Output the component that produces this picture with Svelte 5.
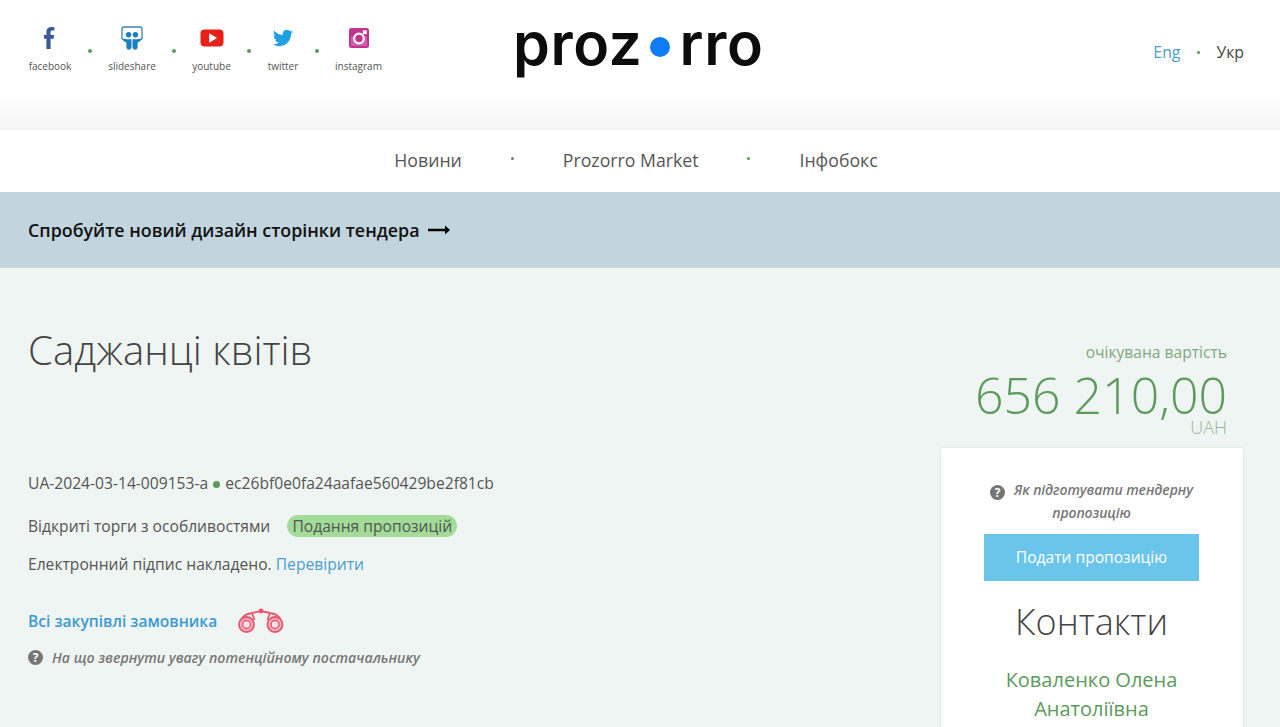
<script>
  const SOCIAL = [
    { name: 'facebook', width: 44 },
    { name: 'slideshare', width: 48 },
    { name: 'youtube', width: 39 },
    { name: 'twitter', width: 32 },
    { name: 'instagram', width: 47 },
  ];
</script>

<div class="page">
  <header class="top">
    <ul class="social">
      {#each SOCIAL as s, i}
        {#if i > 0}<li class="sep"></li>{/if}
        <li class="soc" style="width: {s.width}px">
          <span class="ico">
            {#if s.name === 'facebook'}
              <svg width="24" height="24" viewBox="0 0 24 24"><path fill="#3b5998" d="M16.4 1.2c-1-.2-2.2-.2-3-.2-3.2 0-5 1.8-5 4.8V9H6v3.8h2.4V23h4.2V12.8h3l.5-3.8h-3.5V6.2c0-1 .4-1.7 1.9-1.7h1.9z"/></svg>
            {:else if s.name === 'slideshare'}
              <svg width="24" height="24" viewBox="0 0 24 24">
                <path fill="#fff" stroke="#3a82b8" stroke-width="1.3" d="M2 12.5V3a2 2 0 0 1 2-2h16a2 2 0 0 1 2 2v9.5"/>
                <path fill="#1a7fc1" d="M1 11.5c2 1.2 3.5 1.7 5.5 1.7h5V21c0 1.6-1.2 2.7-2.6 2.7S6.4 22.6 6.4 21v-4.5C4 15.5 2 14 1 11.5zM23 11.5c-2 1.2-3.5 1.7-5.5 1.7h-5V21c0 1.6 1.2 2.7 2.6 2.7s2.5-1.1 2.5-2.7v-4.500c2.400-1 4.400-2.500 5.400-5z"/>
                <circle cx="8.6" cy="8.8" r="2.7" fill="#1a7fc1"/>
                <circle cx="15.4" cy="8.8" r="2.7" fill="#1a7fc1"/>
              </svg>
            {:else if s.name === 'youtube'}
              <svg width="24" height="24" viewBox="0 0 24 24">
                <rect x="0.5" y="3.5" width="23" height="17" rx="4" fill="#e62117"/>
                <path fill="#fff" d="M9.2 7.3v9.4l8-4.7z"/>
              </svg>
            {:else if s.name === 'twitter'}
              <svg width="20" height="20" viewBox="0 0 24 24"><path fill="#1da1e2" d="M23.953 4.57a10 10 0 01-2.825.775 4.958 4.958 0 002.163-2.723c-.951.555-2.005.959-3.127 1.184a4.92 4.92 0 00-8.384 4.482C7.69 8.095 4.067 6.13 1.64 3.162a4.822 4.822 0 00-.666 2.475c0 1.71.87 3.213 2.188 4.096a4.904 4.904 0 01-2.228-.616v.06a4.923 4.923 0 003.946 4.827 4.996 4.996 0 01-2.212.085 4.936 4.936 0 004.604 3.417 9.867 9.867 0 01-6.102 2.105c-.39 0-.779-.023-1.17-.067a13.995 13.995 0 007.557 2.209c9.053 0 13.998-7.496 13.998-13.985 0-.21 0-.42-.015-.63A9.935 9.935 0 0024 4.59z"/></svg>
            {:else}
              <svg width="20" height="20" viewBox="0 0 20 20">
                <rect width="20" height="20" rx="2.5" fill="#c1338f"/>
                <rect x="2" y="8.5" width="16" height="9.5" fill="#dd8cc4" opacity="0.5"/>
                <circle cx="10" cy="10.5" r="4.8" fill="#c1338f" stroke="#fff" stroke-width="2.2"/>
                <rect x="13.8" y="2.2" width="4" height="4" rx="0.8" fill="#fff"/>
              </svg>
            {/if}
          </span>
          <span class="soc-label">{s.name}</span>
        </li>
      {/each}
    </ul>

    <a class="logo" href="#top">proz<span class="logo-dot"></span>rro</a>

    <div class="langs">
      <a class="lang-on" href="#en">Eng</a>
      <span class="sep small"></span>
      <span>Укр</span>
    </div>
  </header>

  <nav class="menu">
    <a href="#news">Новини</a>
    <span class="sep tiny grey"></span>
    <a href="#market">Prozorro Market</a>
    <span class="sep tiny"></span>
    <a href="#infobox">Інфобокс</a>
  </nav>

  <div class="banner">
    <a href="#new">Спробуйте новий дизайн сторінки тендера</a>
    <svg width="22" height="10" viewBox="0 0 22 10"><path d="M0 3.8h17V.5L22 5l-5 4.5V6.2H0z" fill="#000"/></svg>
  </div>

  <main class="content">
    <section class="left">
      <h1>Саджанці квітів</h1>
      <p class="ids">UA-2024-03-14-009153-a <i class="bullet"></i> ec26bf0e0fa24aafae560429be2f81cb</p>
      <p class="kind">Відкриті торги з особливостями <span class="status">Подання пропозицій</span></p>
      <p class="sign">Електронний підпис накладено. <a href="#check">Перевірити</a></p>
      <div class="buyer">
        <a href="#all">Всі закупівлі замовника</a>
        <svg width="46" height="26" viewBox="0 0 46 26" fill="none" stroke="#e8566f">
          <path stroke-width="1.8" d="M3.5 11C6 7 10 5.5 14 5l9-2 9 2c4 .5 8 2 10.5 6M14 5l2.5 7M32 5l-2.5 7"/>
          <circle cx="8.5" cy="16.5" r="7.5" fill="#f7b3c0" stroke-width="1.8"/>
          <circle cx="8.5" cy="16.5" r="4" fill="#fbe4e8" stroke-width="1.5"/>
          <circle cx="37" cy="16.5" r="7.5" fill="#f7b3c0" stroke-width="1.8"/>
          <circle cx="37" cy="16.5" r="4" fill="#fbe4e8" stroke-width="1.5"/>
          <circle cx="23" cy="3" r="2.4" fill="#e8566f" stroke="none"/>
        </svg>
      </div>
      <a class="hint" href="#hint">
        <span class="q">?</span>
        <span>На що звернути увагу потенційному постачальнику</span>
      </a>
    </section>

    <aside class="side">
      <div class="price">
        <div class="price-label">очікувана вартість</div>
        <div class="price-value">656 210,00</div>
        <div class="price-cur">UAH</div>
      </div>
      <div class="card">
        <a class="hint center" href="#prep"><span class="q">?</span>Як підготувати тендерну пропозицію</a>
        <a class="submit" href="#bid">Подати пропозицію</a>
        <h2>Контакти</h2>
        <div class="person">Коваленко Олена Анатоліївна</div>
      </div>
    </aside>
  </main>
</div>

<style>
  :global(body) {
    margin: 0;
    overflow: hidden;
    font-family: "Open Sans", sans-serif;
    color: #444;
  }
  a { text-decoration: none; color: inherit; }
  ul { list-style: none; margin: 0; padding: 0; }

  .page { height: 727px; overflow: hidden; background: #eff5f2; }

  .top {
    height: 130px;
    box-sizing: border-box;
    display: flex;
    justify-content: space-between;
    align-items: flex-start;
    padding: 0 36px 0 28px;
    background: linear-gradient(to bottom, #fff 0, #fff 92px, #f5f5f5 130px);
    position: relative;
  }
  .social { display: flex; align-items: flex-start; padding-top: 26px; }
  .soc { display: flex; flex-direction: column; align-items: center; }
  .ico { height: 24px; display: flex; align-items: center; justify-content: center; }
  .soc-label { margin-top: 8px; font-size: 10px; line-height: 16px; color: #555; white-space: nowrap; }
  .sep {
    display: block;
    width: 4px;
    height: 4px;
    border-radius: 50%;
    background: #5b9a5b;
  }
  .social .sep { margin: 23px 16px 0; }
  .sep.small { width: 3px; height: 3px; margin-left: 1px; background: #4d9a4d; }
  .sep.tiny { width: 3px; height: 3px; margin-top: -3px; }
  .sep.grey { background: #777; }

  .logo {
    position: absolute;
    left: 513px;
    top: 9px;
    display: flex;
    align-items: center;
    font-family: Inter, sans-serif;
    font-weight: 600;
    font-size: 59px;
    line-height: 70px;
    letter-spacing: 0.6px;
    color: #0c0c0c;
  }
  .logo-dot {
    width: 20px;
    height: 20px;
    border-radius: 50%;
    background: #0f7bf5;
    margin: 0 10px 0 7px;
    position: relative;
    top: 3px;
  }

  .langs {
    display: flex;
    align-items: center;
    gap: 16px;
    padding-top: 41px;
    font-size: 15.8px;
    line-height: 22px;
    color: #444;
  }
  .lang-on { color: #4a9fd0; }

  .menu {
    height: 62px;
    box-sizing: border-box;
    padding: 0 8px 2px 0;
    background: #fff;
    display: flex;
    justify-content: center;
    align-items: center;
    gap: 49px;
    font-size: 17.7px;
    color: #555;
  }

  .banner {
    height: 76px;
    box-sizing: border-box;
    background: #c2d5de;
    border-bottom: 1px solid #c9d9df;
    display: flex;
    align-items: center;
    gap: 9px;
    padding: 0 28px;
    font-size: 17.85px;
    font-weight: 600;
    color: #111;
  }

  .content {
    display: flex;
    justify-content: space-between;
    padding: 0 37px 0 28px;
  }
  .left { flex: 1; }
  h1 {
    margin: 57px 0 0;
    font-weight: 300;
    font-size: 40.2px;
    line-height: 50px;
    color: #444;
  }
  .left p { margin: 0; font-size: 15.63px; line-height: 24px; color: #555; }
  .ids { padding-top: 96px; }
  .bullet {
    display: inline-block;
    width: 7px;
    height: 7px;
    border-radius: 50%;
    background: #5b9a5b;
    margin: 0 1px;
    vertical-align: 1px;
  }
  .left .kind { margin-top: 19px; }
  .status {
    display: inline-block;
    margin-left: 13px;
    padding: 0 5px;
    background: #a2dc98;
    border-radius: 11px;
    line-height: 22px;
  }
  .left .sign { margin-top: 14px; }
  .sign a { color: #4a9fd0; }

  .buyer {
    display: flex;
    align-items: center;
    gap: 21px;
    margin-top: 32px;
    font-size: 15.6px;
    font-weight: 600;
    color: #3d9ad1;
  }
  .hint {
    display: flex;
    gap: 9px;
    margin-top: 12px;
    font-size: 14.15px;
    line-height: 23px;
    font-style: italic;
    font-weight: 600;
    color: #777;
  }
  .q {
    flex: none;
    box-sizing: border-box;
    display: inline-block;
    width: 15px;
    height: 15px;
    margin-top: 4px;
    border-radius: 50%;
    background: #757575;
    color: #fff;
    font-style: normal;
    font-weight: 700;
    font-size: 12px;
    line-height: 15px;
    letter-spacing: 0;
    text-align: center;
  }

  .side { width: 302px; flex: none; }
  .price { text-align: right; padding: 72px 16px 0 0; color: #5b9a5b; }
  .price-label { font-size: 15.6px; line-height: 24px; color: #7ea87e; }
  .price-value { margin-top: 6px; font-size: 50px; line-height: 50px; font-weight: 300; }
  .price-cur { font-size: 18px; line-height: 14px; font-weight: 300; color: #95b995; }

  .card {
    margin-top: 14px;
    background: #fff;
    box-shadow: 0 0 2px rgba(0, 0, 0, 0.12);
    padding: 30px 44px 60px 43px;
    text-align: center;
  }
  .hint.center { display: block; margin: 0; font-size: 14px; letter-spacing: -0.1px; }
  .hint.center .q { vertical-align: -2px; margin: 0 9px 0 0; }
  .submit {
    display: block;
    margin-top: 10px;
    height: 47px;
    line-height: 47px;
    background: #6bc5ea;
    color: #fff;
    font-size: 15.6px;
  }
  h2 {
    margin: 18px 0 0;
    font-weight: 300;
    font-size: 36px;
    line-height: 46px;
    color: #444;
  }
  .person {
    margin-top: 20px;
    font-size: 20px;
    line-height: 29px;
    color: #5b9a5b;
  }
</style>
